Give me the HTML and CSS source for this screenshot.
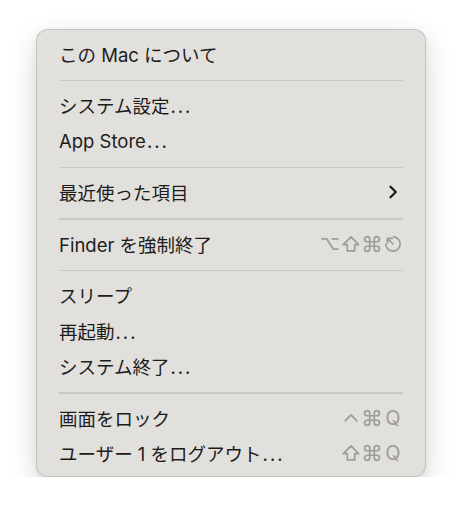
FILE: index.html
```html
<!DOCTYPE html>
<html lang="ja">
<head>
<meta charset="utf-8">
<link rel="stylesheet" href="styles.css">
</head>
<body>
<div class="menu">
  <div class="item"><span class="label">この Mac について</span></div>
  <div class="sep"></div>
  <div class="item"><span class="label">システム設定<span class="ell">...</span></span></div>
  <div class="item"><span class="label">App Store<span class="ell">...</span></span></div>
  <div class="sep"></div>
  <div class="item"><span class="label">最近使った項目</span>
    <svg class="chev" viewBox="0 0 10 14" width="10" height="14"><polyline points="2.5,1.8 7.8,7 2.5,12.2"/></svg>
  </div>
  <div class="sep"></div>
  <div class="item"><span class="label">Finder を強制終了</span>
    <span class="keys">
      <svg class="k" viewBox="0 0 16 16" width="18" height="18"><path d="M1 3.5H5.2L10.8 12.5H15M10 3.5H15"/></svg>
      <svg class="k" viewBox="0 0 16 16" width="18" height="18"><path d="M8 1.6L14.8 8.6H11.3V14.2H4.7V8.6H1.2Z"/></svg>
      <svg class="k" viewBox="0 0 16 16" width="18" height="18"><path d="M6 6V3.7A2.3 2.3 0 1 0 3.7 6H12.3A2.3 2.3 0 1 0 10 3.7V12.3A2.3 2.3 0 1 0 12.3 10H3.7A2.3 2.3 0 1 0 6 12.3Z"/></svg>
      <svg class="k" viewBox="0 0 16 16" width="18" height="18"><path d="M8.6 1.6A6.4 6.4 0 1 1 1.6 8.4M3 3L8 8M3 3H7.2M3 3V7.2"/></svg>
    </span>
  </div>
  <div class="sep"></div>
  <div class="item"><span class="label">スリープ</span></div>
  <div class="item"><span class="label">再起動<span class="ell">...</span></span></div>
  <div class="item"><span class="label">システム終了<span class="ell">...</span></span></div>
  <div class="sep"></div>
  <div class="item"><span class="label">画面をロック</span>
    <span class="keys">
      <svg class="k" viewBox="0 0 16 16" width="18" height="18"><path d="M2.8 10.5L8 5.3L13.2 10.5"/></svg>
      <svg class="k" viewBox="0 0 16 16" width="18" height="18"><path d="M6 6V3.7A2.3 2.3 0 1 0 3.7 6H12.3A2.3 2.3 0 1 0 10 3.7V12.3A2.3 2.3 0 1 0 12.3 10H3.7A2.3 2.3 0 1 0 6 12.3Z"/></svg>
      <span class="q">Q</span>
    </span>
  </div>
  <div class="item"><span class="label">ユーザー 1 をログアウト<span class="ell">...</span></span>
    <span class="keys">
      <svg class="k" viewBox="0 0 16 16" width="18" height="18"><path d="M8 1.6L14.8 8.6H11.3V14.2H4.7V8.6H1.2Z"/></svg>
      <svg class="k" viewBox="0 0 16 16" width="18" height="18"><path d="M6 6V3.7A2.3 2.3 0 1 0 3.7 6H12.3A2.3 2.3 0 1 0 10 3.7V12.3A2.3 2.3 0 1 0 12.3 10H3.7A2.3 2.3 0 1 0 6 12.3Z"/></svg>
      <span class="q">Q</span>
    </span>
  </div>
</div>
</body>
</html>
```
FILE: styles.css
```css
html, body {
  margin: 0;
  background: #ffffff;
}
body {
  padding: 29px 0 0 36px;
  font-family: "Inter", "Noto Sans CJK JP", sans-serif;
}
.menu {
  box-sizing: border-box;
  width: 390px;
  height: 448px;
  padding: 7px 0 5px;
  background: #e2e0dd;
  border: 1px solid rgba(0, 0, 0, 0.13);
  border-radius: 12px;
  box-shadow: 0 10px 28px rgba(0, 0, 0, 0.16), 0 2px 6px rgba(0, 0, 0, 0.06);
}
.item {
  box-sizing: border-box;
  height: 35.5px;
  display: flex;
  align-items: center;
  justify-content: space-between;
  padding: 0 24px 2.5px 22px;
}
.label {
  font-size: 18.5px;
  color: #1d1c1b;
  white-space: nowrap;
}
.ell {
  letter-spacing: 2px;
  margin-left: 1px;
}
.sep {
  height: 1.5px;
  margin: 7.25px 22px;
  background: #cbc9c6;
}
.chev {
  fill: none;
  stroke: #1a1a1a;
  stroke-width: 2.3;
  stroke-linecap: round;
  stroke-linejoin: round;
  margin-right: 3px;
}
.keys {
  display: flex;
  align-items: center;
  gap: 3px;
  margin-right: -1px;
}
.k {
  fill: none;
  stroke: #9f9d9a;
  stroke-width: 1.55;
  stroke-linecap: round;
  stroke-linejoin: round;
}
.q {
  font-family: "Inter", sans-serif;
  font-size: 20px;
  color: #9f9d9a;
  width: 18px;
  text-align: center;
}
```
